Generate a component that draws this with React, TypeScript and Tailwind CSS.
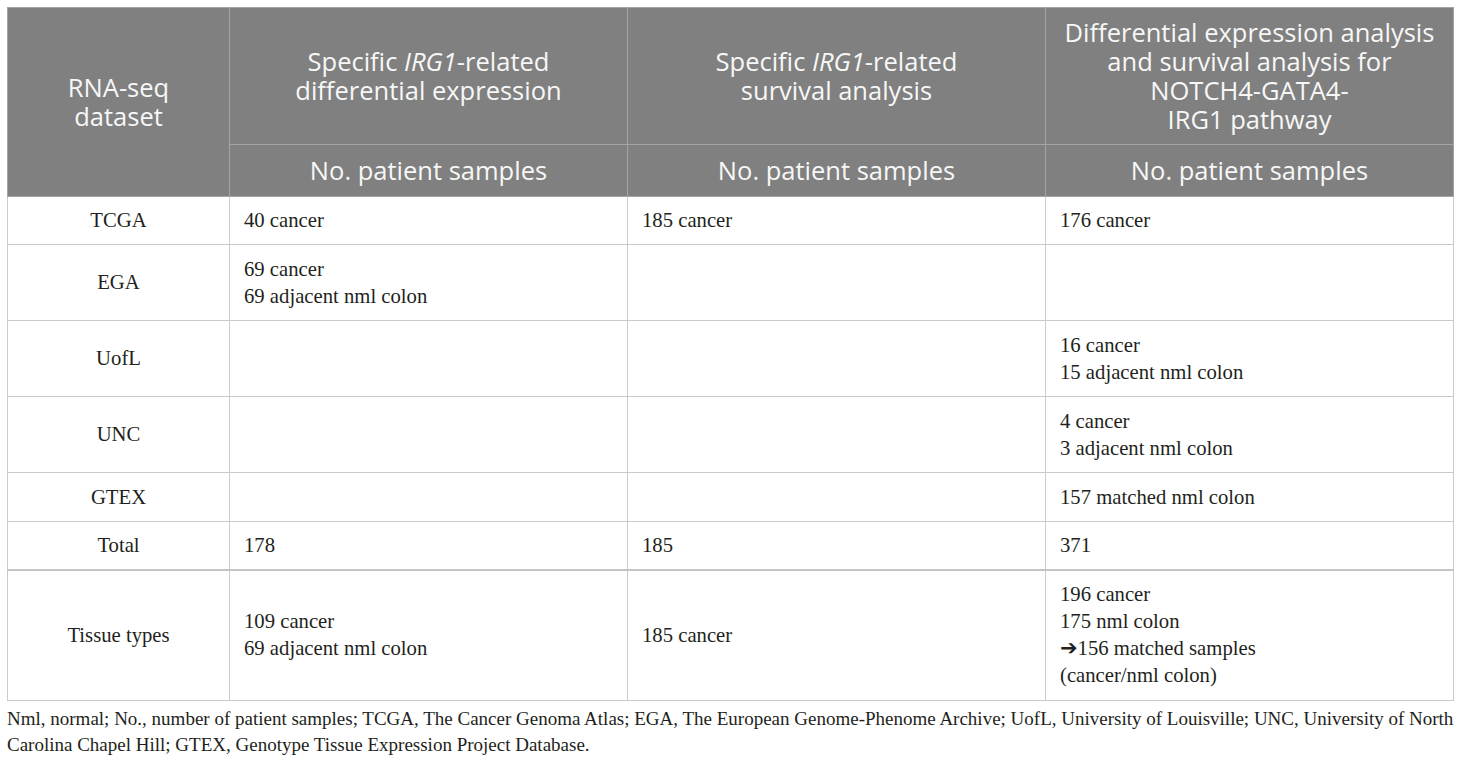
import React from 'react';

const rows: { name: string; c1: string[]; c2: string[]; c3: string[]; h: string }[] = [
  { name: 'TCGA', c1: ['40 cancer'], c2: ['185 cancer'], c3: ['176 cancer'], h: 'h-[48px]' },
  { name: 'EGA', c1: ['69 cancer', '69 adjacent nml colon'], c2: [], c3: [], h: 'h-[76px]' },
  { name: 'UofL', c1: [], c2: [], c3: ['16 cancer', '15 adjacent nml colon'], h: 'h-[76px]' },
  { name: 'UNC', c1: [], c2: [], c3: ['4 cancer', '3 adjacent nml colon'], h: 'h-[76px]' },
  { name: 'GTEX', c1: [], c2: [], c3: ['157 matched nml colon'], h: 'h-[49px]' },
  { name: 'Total', c1: ['178'], c2: ['185'], c3: ['371'], h: 'h-[48px]' },
  {
    name: 'Tissue types',
    c1: ['109 cancer', '69 adjacent nml colon'],
    c2: ['185 cancer'],
    c3: ['196 cancer', '175 nml colon', '\u2794156 matched samples', '(cancer/nml colon)'],
    h: 'h-[131px]',
  },
];

const Lines: React.FC<{ lines: string[] }> = ({ lines }) => (
  <>
    {lines.map((l, i) => (
      <div key={i}>
        {l.startsWith('\u2794') ? (
          <>
            <span className="font-['DejaVu_Sans',sans-serif] text-[21px] font-bold leading-none">{'\u2794'}</span>
            {l.slice(1)}
          </>
        ) : (
          l
        )}
      </div>
    ))}
  </>
);

export default function App() {
  const head = 'border border-[#a3a4a3] text-center align-middle font-normal';
  const cell = 'border border-[#cbcbcb] align-middle px-[14px]';
  return (
    <div className="bg-white min-h-screen pt-[7px] px-[7px] font-['Liberation_Serif',serif] text-[#231f20]">
      <table className="w-[1446px] border-collapse table-fixed">
        <colgroup>
          <col className="w-[222px]" />
          <col className="w-[398px]" />
          <col className="w-[418px]" />
          <col className="w-[408px]" />
        </colgroup>
        <thead className="bg-[#7f807f] text-[#f7f7f7] font-['Open_Sans',sans-serif] text-[25.5px] leading-[29px]">
          <tr className="h-[137px]">
            <th rowSpan={2} className={head}>
              RNA-seq
              <br />
              dataset
            </th>
            <th className={head}>
              Specific <i>IRG1</i>-related
              <br />
              differential expression
            </th>
            <th className={head}>
              Specific <i>IRG1</i>-related
              <br />
              survival analysis
            </th>
            <th className={head}>
              Differential expression analysis
              <br />
              and survival analysis for
              <br />
              NOTCH4-GATA4-
              <br />
              IRG1 pathway
            </th>
          </tr>
          <tr className="h-[52px]">
            <th className={head}>No. patient samples</th>
            <th className={head}>No. patient samples</th>
            <th className={head}>No. patient samples</th>
          </tr>
        </thead>
        <tbody className="text-[20.7px] leading-[27px]">
          {rows.map((r) => {
            const b = r.name === 'Total' ? 'border-b-2 border-b-[#c4c4c4]' : '';
            return (
              <tr key={r.name} className={r.h}>
                <td className={`${cell} ${b} text-center`}>{r.name}</td>
                <td className={`${cell} ${b} text-left`}>
                  <Lines lines={r.c1} />
                </td>
                <td className={`${cell} ${b} text-left`}>
                  <Lines lines={r.c2} />
                </td>
                <td className={`${cell} ${b} text-left`}>
                  <Lines lines={r.c3} />
                </td>
              </tr>
            );
          })}
        </tbody>
      </table>
      <p className="mt-[5px] w-[1446px] text-[19px] leading-[26px] whitespace-nowrap">
        Nml, normal; No., number of patient samples; TCGA, The Cancer Genoma Atlas; EGA, The European Genome-Phenome Archive; UofL, University of Louisville; UNC, University of North
        <br />
        Carolina Chapel Hill; GTEX, Genotype Tissue Expression Project Database.
      </p>
    </div>
  );
}
